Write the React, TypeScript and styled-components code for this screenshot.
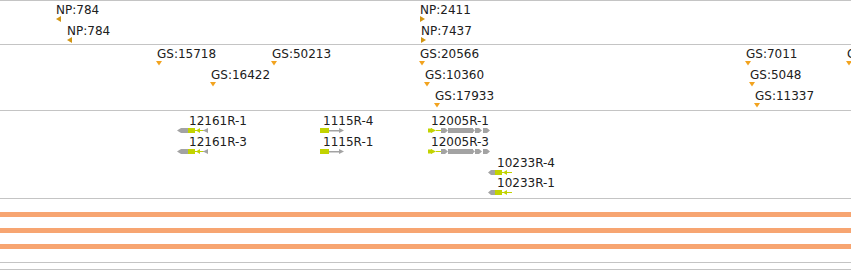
import React from "react";
import styled, { createGlobalStyle } from "styled-components";

const GlobalStyle = createGlobalStyle`
  html, body {
    margin: 0;
    padding: 0;
    background: #fff;
  }
  body {
    font-family: "DejaVu Sans", "Liberation Sans", sans-serif;
    overflow: hidden;
  }
`;

const GREY = "#a3a3a3";
const LIME = "#c2d300";

type Strand = "left" | "right" | "down";

type Marker = {
  label: string;
  x: number;
  y: number;
  dir: Strand;
};

type Gene = {
  label: string;
  x: number;
  y: number;
  labelOffset: number;
  kind: "a" | "b" | "c" | "d";
};

const npMarkers: Marker[] = [
  { label: "NP:784", x: 56, y: 3, dir: "left" },
  { label: "NP:784", x: 67, y: 24, dir: "left" },
  { label: "NP:2411", x: 420, y: 3, dir: "right" },
  { label: "NP:7437", x: 421, y: 24, dir: "right" },
];

const gsMarkers: Marker[] = [
  { label: "GS:15718", x: 156, y: 3, dir: "down" },
  { label: "GS:50213", x: 271, y: 3, dir: "down" },
  { label: "GS:16422", x: 210, y: 24, dir: "down" },
  { label: "GS:20566", x: 419, y: 3, dir: "down" },
  { label: "GS:10360", x: 424, y: 24, dir: "down" },
  { label: "GS:17933", x: 434, y: 45, dir: "down" },
  { label: "GS:7011", x: 745, y: 3, dir: "down" },
  { label: "GS:5048", x: 749, y: 24, dir: "down" },
  { label: "GS:11337", x: 754, y: 45, dir: "down" },
  { label: "GS:9302", x: 846, y: 3, dir: "down" },
];

const genes: Gene[] = [
  { label: "12161R-1", x: 177, y: 4, labelOffset: 12, kind: "a" },
  { label: "12161R-3", x: 177, y: 25, labelOffset: 12, kind: "a" },
  { label: "1115R-4", x: 320, y: 4, labelOffset: 3, kind: "b" },
  { label: "1115R-1", x: 320, y: 25, labelOffset: 3, kind: "b" },
  { label: "12005R-1", x: 428, y: 4, labelOffset: 3, kind: "c" },
  { label: "12005R-3", x: 428, y: 25, labelOffset: 3, kind: "c" },
  { label: "10233R-4", x: 488, y: 46, labelOffset: 9, kind: "d" },
  { label: "10233R-1", x: 488, y: 66, labelOffset: 9, kind: "d" },
];

export default function App() {
  return (
    <>
      <GlobalStyle />
      <Browser>
        <Track $height={43} $first>
          {npMarkers.map((m, i) => (
            <Feature key={i} style={{ left: m.x, top: m.y }}>
              <Label>{m.label}</Label>
              <Arrow dir={m.dir} />
            </Feature>
          ))}
        </Track>
        <Track $height={65}>
          {gsMarkers.map((m, i) => (
            <Feature key={i} style={{ left: m.x, top: m.y }}>
              <Label $offset={1}>{m.label}</Label>
              <Arrow dir={m.dir} />
            </Feature>
          ))}
        </Track>
        <Track $height={87}>
          {genes.map((g, i) => (
            <Feature key={i} style={{ left: g.x, top: g.y }}>
              <Label $offset={g.labelOffset}>{g.label}</Label>
              <GeneGlyph kind={g.kind} />
            </Feature>
          ))}
        </Track>
        <Track $height={63}>
          <Bands>
            <Band />
            <Band />
            <Band />
          </Bands>
        </Track>
        <Track $height={6} />
      </Browser>
    </>
  );
}

function Arrow({ dir }: { dir: Strand }) {
  if (dir === "down") {
    return (
      <MarkSvg width={6} height={5} $gap={1}>
        <polygon points="0,0 6,0 3,4.5" fill="#f2a31f" />
      </MarkSvg>
    );
  }
  const pts = dir === "left" ? "0,3 5,0 5,6" : "0,0 5,3 0,6";
  return (
    <MarkSvg width={5} height={6} $gap={0}>
      <polygon points={pts} fill="#d19513" />
    </MarkSvg>
  );
}

function GeneGlyph({ kind }: { kind: Gene["kind"] }) {
  if (kind === "a") {
    return (
      <MarkSvg width={32} height={5} $gap={1}>
        <polygon points="0,2.5 4,0 11,0 11,5 4,5" fill={GREY} />
        <rect x={11} y={0} width={7} height={5} fill={LIME} />
        <rect x={18} y={2} width={8} height={1} fill={LIME} />
        <polygon points="19,2.5 23,0 23,5" fill={LIME} />
        <rect x={26} y={2} width={5} height={1} fill={GREY} />
        <polygon points="26,2.5 31,0 31,5" fill={GREY} />
      </MarkSvg>
    );
  }
  if (kind === "b") {
    return (
      <MarkSvg width={24} height={5} $gap={1}>
        <rect x={0} y={0} width={9} height={5} fill={LIME} />
        <rect x={9} y={2} width={11} height={1.5} fill={GREY} />
        <polygon points="19,0 24,2.5 19,5" fill={GREY} />
      </MarkSvg>
    );
  }
  if (kind === "c") {
    return (
      <MarkSvg width={64} height={5} $gap={1}>
        <rect x={0} y={0.5} width={4} height={4} fill={LIME} />
        <polygon points="3,0 8,2.5 3,5" fill={LIME} />
        <rect x={8} y={2} width={5} height={1} fill={LIME} />
        <polygon points="13,0 17,0 20,2.5 17,5 13,5" fill={GREY} />
        <rect x={20} y={0} width={25} height={5} fill={GREY} />
        <polygon points="44,0 47,2.5 44,5" fill={GREY} />
        <polygon points="47,0 51,0 54,2.5 51,5 47,5" fill={GREY} />
        <polygon points="55,0 59,0 62,2.5 59,5 55,5" fill={GREY} />
      </MarkSvg>
    );
  }
  return (
    <MarkSvg width={24} height={5} $gap={1}>
      <polygon points="0,2.5 3,0 7,0 7,5 3,5" fill={GREY} />
      <rect x={7} y={0} width={7} height={5} fill={LIME} />
      <rect x={14} y={2} width={10} height={1} fill={LIME} />
      <polygon points="15,2.5 19,0 19,5" fill={LIME} />
    </MarkSvg>
  );
}

const Browser = styled.div`
  width: 851px;
  height: 270px;
  overflow: hidden;
  background: #fff;
`;

const Track = styled.div<{ $height: number; $first?: boolean }>`
  position: relative;
  height: ${(p) => p.$height}px;
  border-top: ${(p) => (p.$first ? "1px solid #c4c4c4" : "none")};
  border-bottom: 1px solid #c4c4c4;
  overflow: hidden;
`;

const Feature = styled.div`
  position: absolute;
  display: flex;
  flex-direction: column;
  align-items: flex-start;
  white-space: nowrap;
`;

const Label = styled.span<{ $offset?: number }>`
  display: block;
  margin-left: ${(p) => p.$offset ?? 0}px;
  font-size: 12px;
  line-height: 12px;
  color: #202020;
`;

const MarkSvg = styled.svg<{ $gap: number }>`
  display: block;
  margin-top: ${(p) => p.$gap}px;
`;

const Bands = styled.div`
  display: flex;
  flex-direction: column;
  gap: 11px;
  padding-top: 13px;
`;

const Band = styled.div`
  height: 5px;
  background: #f7a571;
`;
